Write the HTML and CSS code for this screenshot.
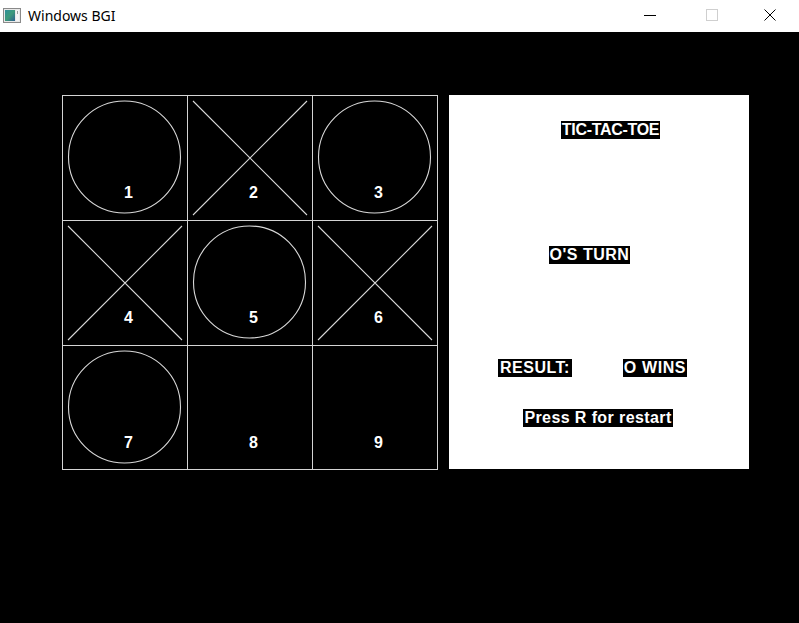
FILE: index.html
```html
<!DOCTYPE html>
<html>
<head>
<meta charset="utf-8">
<title>Windows BGI</title>
<link rel="stylesheet" href="styles.css">
</head>
<body>
<div class="titlebar">
  <div class="title-left">
    <svg class="app-icon" width="18" height="15" viewBox="0 0 18 15">
      <defs>
        <linearGradient id="g" x1="0" y1="0" x2="1" y2="1">
          <stop offset="0" stop-color="#2f8f9a"/>
          <stop offset="0.5" stop-color="#3d9a7a"/>
          <stop offset="1" stop-color="#2c5f8f"/>
        </linearGradient>
      </defs>
      <rect x="0.5" y="0.5" width="17" height="14" fill="#e8e8e8" stroke="#8a8a8a"/>
      <rect x="2" y="2" width="10" height="11" fill="url(#g)"/>
      <rect x="13" y="2" width="3" height="11" fill="#f4f4f4"/>
      <rect x="14" y="3" width="1" height="3" fill="#9a9a9a"/>
    </svg>
    <span class="title-text">Windows BGI</span>
  </div>
  <div class="controls">
    <div class="ctl ctl-min"><svg width="12" height="12" viewBox="0 0 12 12"><line x1="0" y1="6.5" x2="12" y2="6.5" stroke="#000" stroke-width="1"/></svg></div>
    <div class="ctl"><svg width="12" height="12" viewBox="0 0 12 12"><rect x="0.5" y="0.5" width="11" height="11" fill="none" stroke="#cfcfcf" stroke-width="1"/></svg></div>
    <div class="ctl"><svg width="12" height="12" viewBox="0 0 12 12"><path d="M0.5 0.5 L11.5 11.5 M11.5 0.5 L0.5 11.5" stroke="#000" stroke-width="1"/></svg></div>
  </div>
</div>
<div class="canvas">
  <div class="board">
    <div class="cell">
      <svg class="mark" viewBox="0 0 124 124"><circle cx="61.5" cy="61" r="56"/></svg>
      <span class="num">1</span>
    </div>
    <div class="cell">
      <svg class="mark" viewBox="0 0 124 124"><path d="M5 5 L119 119 M119 5 L5 119"/></svg>
      <span class="num">2</span>
    </div>
    <div class="cell">
      <svg class="mark" viewBox="0 0 124 124"><circle cx="61.5" cy="61" r="56"/></svg>
      <span class="num">3</span>
    </div>
    <div class="cell">
      <svg class="mark" viewBox="0 0 124 124"><path d="M5 5 L119 119 M119 5 L5 119"/></svg>
      <span class="num">4</span>
    </div>
    <div class="cell">
      <svg class="mark" viewBox="0 0 124 124"><circle cx="61.5" cy="61" r="56"/></svg>
      <span class="num">5</span>
    </div>
    <div class="cell">
      <svg class="mark" viewBox="0 0 124 124"><path d="M5 5 L119 119 M119 5 L5 119"/></svg>
      <span class="num">6</span>
    </div>
    <div class="cell">
      <svg class="mark" viewBox="0 0 124 124"><circle cx="61.5" cy="61" r="56"/></svg>
      <span class="num">7</span>
    </div>
    <div class="cell">
      <span class="num">8</span>
    </div>
    <div class="cell">
      <span class="num">9</span>
    </div>
  </div>
  <div class="panel">
    <span class="label l-title">TIC-TAC-TOE</span>
    <span class="label l-turn">O'S TURN</span>
    <div class="result-row">
      <span class="label l-result">RESULT:</span>
      <span class="label l-wins">O WINS</span>
    </div>
    <span class="label l-restart">Press R for restart</span>
  </div>
</div>
</body>
</html>
```
FILE: styles.css
```css
html, body {
  margin: 0;
  padding: 0;
  background: #000;
  width: 799px;
  height: 623px;
  overflow: hidden;
}

.titlebar {
  height: 32px;
  background: #fff;
  display: flex;
  justify-content: space-between;
  align-items: stretch;
}

.title-left {
  display: flex;
  align-items: center;
  padding-left: 3px;
  gap: 7px;
}

.app-icon {
  display: block;
  margin-top: -2px;
}

.title-text {
  font-family: "Noto Sans", "Open Sans", sans-serif;
  font-size: 14px;
  color: #000;
  margin-top: -2px;
}

.controls {
  display: flex;
}

.ctl {
  width: 58px;
  display: flex;
  align-items: center;
  justify-content: center;
  padding-bottom: 2px;
}

.ctl-min {
  padding-right: 4px;
}

.ctl svg {
  display: block;
}

.canvas {
  display: flex;
  align-items: flex-start;
  gap: 11px;
  padding-top: 63px;
  padding-left: 62px;
}

.board {
  display: grid;
  grid-template-columns: repeat(3, 125px);
  grid-template-rows: 125px 125px 124px;
  border-left: 1px solid #d4d4d4;
  border-top: 1px solid #d4d4d4;
}

.cell {
  display: grid;
  border-right: 1px solid #d4d4d4;
  border-bottom: 1px solid #d4d4d4;
}

.cell > * {
  grid-area: 1 / 1;
}

.mark {
  width: 124px;
  height: 124px;
  display: block;
  fill: none;
  stroke: #d8d8d8;
  stroke-width: 1.1;
}

.num {
  justify-self: start;
  align-self: start;
  margin-left: 61px;
  margin-top: 88px;
  font-family: "Liberation Sans", Arial, sans-serif;
  font-weight: bold;
  font-size: 16px;
  line-height: 18px;
  color: #fff;
}

.panel {
  width: 300px;
  height: 374px;
  background: #fff;
  display: flex;
  flex-direction: column;
  align-items: flex-start;
}

.label {
  background: #000;
  color: #fff;
  font-family: "Liberation Sans", Arial, sans-serif;
  font-weight: bold;
  font-size: 16px;
  line-height: 18px;
  height: 18px;
  white-space: nowrap;
  text-align: center;
  box-sizing: border-box;
  overflow: hidden;
}

.l-title {
  margin-top: 26px;
  margin-left: 112px;
  width: 99px;
  letter-spacing: -0.3px;
}

.l-turn {
  margin-top: 107px;
  margin-left: 100px;
  width: 81px;
  letter-spacing: 0.5px;
}

.result-row {
  display: flex;
  gap: 51px;
  margin-top: 95px;
  margin-left: 49px;
}

.l-result {
  width: 74px;
  letter-spacing: 0.5px;
}

.l-wins {
  width: 64px;
  letter-spacing: 0.6px;
}

.l-restart {
  margin-top: 32px;
  margin-left: 74px;
  width: 150px;
  letter-spacing: 0.4px;
}
```
